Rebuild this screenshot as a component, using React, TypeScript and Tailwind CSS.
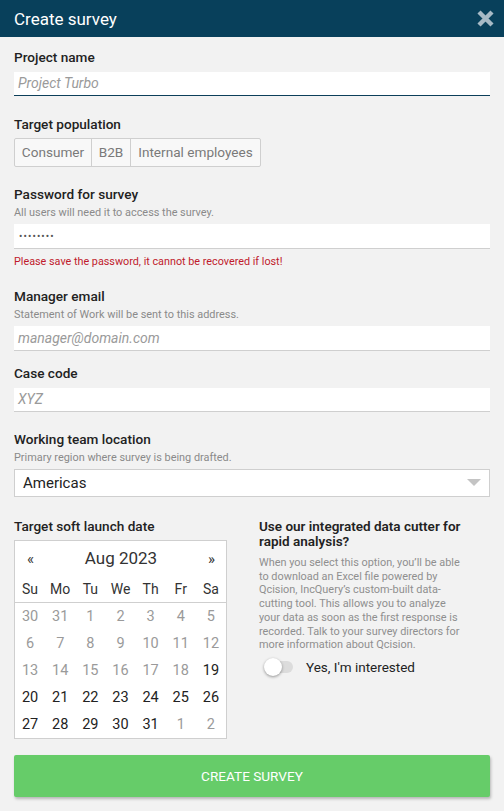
import React from "react";

const font = { fontFamily: "Roboto, 'Liberation Sans', sans-serif" };

function Label({ children, className = "" }: { children: React.ReactNode; className?: string }) {
  return <div className={`text-[13.6px] leading-[17px] font-medium text-[#222] ${className}`}>{children}</div>;
}
function Help({ children, className = "" }: { children: React.ReactNode; className?: string }) {
  return <div className={`text-[10.9px] leading-[13px] text-[#8a8a8a] ${className}`}>{children}</div>;
}

const weeks: [number, boolean][][] = [
  [[30, false], [31, false], [1, false], [2, false], [3, false], [4, false], [5, false]],
  [[6, false], [7, false], [8, false], [9, false], [10, false], [11, false], [12, false]],
  [[13, false], [14, false], [15, false], [16, false], [17, false], [18, false], [19, true]],
  [[20, true], [21, true], [22, true], [23, true], [24, true], [25, true], [26, true]],
  [[27, true], [28, true], [29, true], [30, true], [31, true], [1, false], [2, false]],
];

export default function App() {
  return (
    <div style={font} className="min-h-[811px] w-[504px] bg-[#f2f2f2]">
      <div className="h-[37px] bg-[#08405b] flex items-center justify-between pl-[14px] pr-[9px]">
        <div className="text-white text-[17px] leading-[20px]">Create survey</div>
        <svg width="19" height="19" viewBox="0 0 19 19">
          <path d="M3 3 L16 16 M16 3 L3 16" stroke="#a7bac6" strokeWidth="4.4" strokeLinecap="butt" />
        </svg>
      </div>

      <div className="px-[14px] pt-[12px]">
        <Label>Project name</Label>
        <div className="mt-[6px] h-[24px] bg-white border-b border-[#0c3f5a] pl-[4px] flex items-center text-[14px] italic text-[#9a9a9a]">
          Project Turbo
        </div>

        <Label className="mt-[20px]">Target population</Label>
        <div className="mt-[5px] flex">
          <div className="flex h-[29px] border border-[#cfcfcf] rounded-[2px] bg-[#f8f8f8] text-[13.6px] text-[#7a7a7a]">
            <div className="w-[77px] flex items-center justify-center border-r border-[#cfcfcf]">Consumer</div>
            <div className="w-[39px] flex items-center justify-center border-r border-[#cfcfcf]">B2B</div>
            <div className="w-[129px] flex items-center justify-center">Internal employees</div>
          </div>
        </div>

        <Label className="mt-[19px]">Password for survey</Label>
        <Help className="mt-[3px]">All users will need it to access the survey.</Help>
        <div className="mt-[5px] h-[25px] bg-white border-b border-[#cfcfcf] pl-[5px] flex items-center text-[10px] tracking-[1.1px] text-[#555]">
          ••••••••
        </div>
        <div className="mt-[6px] text-[10.8px] leading-[13px] text-[#c01a2c]">
          Please save the password, it cannot be recovered if lost!
        </div>

        <Label className="mt-[20px]">Manager email</Label>
        <Help className="mt-[3px]">Statement of Work will be sent to this address.</Help>
        <div className="mt-[5px] h-[25px] bg-white border-b border-[#cfcfcf] pl-[4px] flex items-center text-[14px] italic text-[#9a9a9a]">
          manager@domain.com
        </div>

        <Label className="mt-[14px]">Case code</Label>
        <div className="mt-[6px] h-[24px] bg-white border-b border-[#cfcfcf] pl-[4px] flex items-center text-[14px] italic text-[#9a9a9a]">
          XYZ
        </div>

        <Label className="mt-[19px]">Working team location</Label>
        <Help className="mt-[3px]">Primary region where survey is being drafted.</Help>
        <div className="mt-[5px] h-[28px] bg-white border border-[#cfcfcf] pl-[8px] pr-[8px] flex items-center justify-between text-[15px] text-[#222]">
          <span>Americas</span>
          <svg width="14" height="8" viewBox="0 0 14 8">
            <path d="M0 0 L14 0 L7 7 Z" fill="#c4c4c4" />
          </svg>
        </div>

        <div className="mt-[21px] flex gap-[32px]">
          <div className="w-[213px]">
            <Label>Target soft launch date</Label>
            <div className="mt-[5px] w-[213px] bg-white border border-[#cfcfcf]">
              <div className="h-[36px] flex items-center justify-between pl-[12px] pr-[11px] text-[#333]">
                <span className="text-[15px] w-[12px]">«</span>
                <span className="text-[17px]">Aug 2023</span>
                <span className="text-[15px] w-[12px] text-right">»</span>
              </div>
              <div className="h-[26px] grid grid-cols-7 items-center text-center text-[14px] text-[#333] border-b border-[#cfcfcf]">
                {["Su", "Mo", "Tu", "We", "Th", "Fr", "Sa"].map((d) => (
                  <div key={d}>{d}</div>
                ))}
              </div>
              <div>
                {weeks.map((w, i) => (
                  <div key={i} className="h-[27px] grid grid-cols-7 items-center text-center text-[14.5px]">
                    {w.map(([n, active], j) => (
                      <div key={j} className={active ? "text-[#222]" : "text-[#9a9a9a]"}>
                        {n}
                      </div>
                    ))}
                  </div>
                ))}
              </div>
            </div>
          </div>
          <div className="w-[205px]">
            <div className="mt-[1px] text-[13.5px] leading-[15px] font-semibold text-[#222]">
              Use our integrated data cutter for rapid analysis?
            </div>
            <div className="mt-[7px] text-[10.9px] leading-[13.7px] text-[#8f8f8f]">
              When you select this option, you’ll be able to download an Excel file powered by Qcision, IncQuery’s custom-built data-cutting tool. This allows you to analyze your data as soon as the first response is recorded. Talk to your survey directors for more information about Qcision.
            </div>
            <div className="mt-[3px] flex items-center h-[24px]">
              <div className="relative w-[30px] h-[20px] flex items-center ml-[5px]">
                <div className="ml-[2px] w-[27px] h-[12px] rounded-full bg-[#dcdcdc]" />
                <div className="absolute left-0 top-[1px] w-[18px] h-[18px] rounded-full bg-white shadow-[0_1px_3px_rgba(0,0,0,0.4)]" />
              </div>
              <span className="ml-[12px] text-[13.5px] text-[#222]">Yes, I'm interested</span>
            </div>
          </div>
        </div>

        <button className="mt-[16px] w-full h-[42px] rounded-[2px] bg-[#66cc69] text-white text-[13.6px] shadow-[1px_2px_3px_rgba(0,0,0,0.25)]">
          CREATE SURVEY
        </button>
      </div>
    </div>
  );
}
